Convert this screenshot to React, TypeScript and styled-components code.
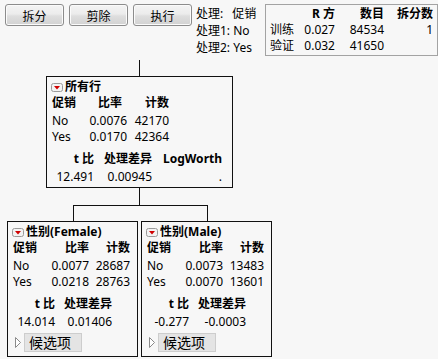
import React from 'react';
import styled, { createGlobalStyle, css } from 'styled-components';

const GlobalStyle = createGlobalStyle`
  body {
    margin: 0;
    background: #f7f7f7;
    font-family: "Noto Sans", "Noto Sans CJK SC", sans-serif;
    font-size: 12px;
    color: #000;
  }
`;

const Page = styled.div`
  padding: 4px 0 0 5px;
  width: 438px;
  height: 359px;
  box-sizing: border-box;
`;

const TopBar = styled.div`
  display: flex;
  align-items: flex-start;
  gap: 4px;
  height: 51px;
`;

const ButtonGroup = styled.div`
  display: flex;
  gap: 5px;
`;

const ToolButton = styled.button`
  width: 59px;
  height: 22px;
  padding: 0;
  border: 1px solid #8c8c8c;
  border-radius: 3px;
  background: linear-gradient(#f4f4f4, #ececec 45%, #dedede 55%, #d2d2d2);
  box-shadow: inset 0 0 0 1px #fbfbfb;
  font-family: "Noto Sans CJK SC", sans-serif;
  font-size: 12px;
  color: #000;
`;

const Labels = styled.div`
  width: 66px;
  padding-top: 1px;
  line-height: 17px;
  white-space: nowrap;
  overflow: hidden;
`;

const Gap = styled.span`
  margin-left: 9px;
`;

const SummaryTable = styled.div`
  display: grid;
  grid-template-columns: 25px 40px 49px 49px;
  grid-auto-rows: 16px;
  align-items: center;
  padding: 1px 4px 1px 4px;
  border: 1px solid #a3a3a3;
  line-height: 16px;
`;

const Cell = styled.div<{ $head?: boolean; $left?: boolean }>`
  text-align: ${p => (p.$left ? 'left' : 'right')};
  white-space: nowrap;
  ${p => p.$head && css`font-weight: 700;`}
`;

const Tree = styled.div`
  margin: 5px 0 0 2px;
  width: 265px;
  display: flex;
  flex-direction: column;
  align-items: center;
`;

const Stem = styled.div<{ $h: number }>`
  width: 1px;
  height: ${p => p.$h}px;
  background: #111;
`;

const Children = styled.div`
  display: flex;
  gap: 3px;
`;

const Branch = styled.div<{ $side: 'left' | 'right' }>`
  position: relative;
  padding-top: 16px;

  &::before {
    content: '';
    position: absolute;
    top: 0;
    left: 50%;
    width: 1px;
    height: 16px;
    background: #111;
  }

  &::after {
    content: '';
    position: absolute;
    top: 0;
    height: 1px;
    background: #111;
    ${p => (p.$side === 'left' ? css`left: 50%; right: -2px;` : css`left: -2px; right: 50%;`)}
  }
`;

const NodeBox = styled.div<{ $w: number }>`
  width: ${p => p.$w}px;
  box-sizing: border-box;
  border: 1px solid #111;
  padding: 2px 4px 2px 5px;
  line-height: 16px;
`;

const Title = styled.div`
  display: flex;
  align-items: center;
  height: 16px;
  margin-left: -1px;
  font-weight: 700;
  white-space: nowrap;
`;

const StatGrid = styled.div<{ $cols: string; $top?: number }>`
  display: grid;
  grid-template-columns: ${p => p.$cols};
  margin-top: ${p => p.$top ?? 0}px;
`;

const GridCell = styled.div<{ $head?: boolean; $left?: boolean; $inset?: number }>`
  height: ${p => (p.$head ? 18 : 16)}px;
  text-align: ${p => (p.$left ? 'left' : 'right')};
  padding-right: ${p => p.$inset ?? 0}px;
  white-space: nowrap;
  ${p => p.$head && css`font-weight: 700;`}
`;

const CandidateRow = styled.div`
  display: flex;
  align-items: center;
  margin: 3px 0 2px 1px;
  gap: 2px;
`;

const CandidateButton = styled.div`
  width: 58px;
  height: 19px;
  box-sizing: border-box;
  border: 1px solid #cdcdcd;
  background: #e4e4e4;
  padding-left: 4px;
  font-family: "Noto Sans CJK SC", sans-serif;
  font-size: 14px;
  line-height: 17px;
`;

function MenuIcon() {
  return (
    <svg width="13" height="9" viewBox="0 0 13 9" style={{ marginRight: 1, flex: 'none' }}>
      <rect x="0.5" y="0.5" width="11" height="8" rx="2" fill="#f3f3f3" stroke="#9a9a9a" />
      <polygon points="3,3 9,3 6,6.5" fill="#d00000" />
    </svg>
  );
}

function Disclosure() {
  return (
    <svg width="8" height="13" viewBox="0 0 8 13">
      <polygon points="1.5,1.5 6.5,6.5 1.5,11.5" fill="#fff" stroke="#8a8a8a" />
    </svg>
  );
}

type Rate = { level: string; rate: string; count: string };

interface NodeProps {
  title: string;
  width: number;
  rates: Rate[];
  rateCols: string;
  rateInset?: number;
  diff: { t: string; diff: string; logworth?: string };
  diffCols: string;
  candidates?: boolean;
}

function TreeNode({ title, width, rates, rateCols, rateInset, diff, diffCols, candidates }: NodeProps) {
  return (
    <NodeBox $w={width}>
      <Title>
        <MenuIcon />
        {title}
      </Title>
      <StatGrid $cols={rateCols}>
        <GridCell $head $left>促销</GridCell>
        <GridCell $head $inset={rateInset}>比率</GridCell>
        <GridCell $head>计数</GridCell>
        {rates.map(r => (
          <React.Fragment key={r.level}>
            <GridCell $left>{r.level}</GridCell>
            <GridCell>{r.rate}</GridCell>
            <GridCell>{r.count}</GridCell>
          </React.Fragment>
        ))}
      </StatGrid>
      <StatGrid $cols={diffCols} $top={6}>
        <GridCell $head>t 比</GridCell>
        <GridCell $head>处理差异</GridCell>
        {diff.logworth !== undefined && <GridCell $head>LogWorth</GridCell>}
        <GridCell>{diff.t}</GridCell>
        <GridCell>{diff.diff}</GridCell>
        {diff.logworth !== undefined && <GridCell>{diff.logworth}</GridCell>}
      </StatGrid>
      {candidates && (
        <CandidateRow>
          <Disclosure />
          <CandidateButton>候选项</CandidateButton>
        </CandidateRow>
      )}
    </NodeBox>
  );
}

export default function App() {
  return (
    <>
      <GlobalStyle />
      <Page>
        <TopBar>
          <ButtonGroup>
            <ToolButton>拆分</ToolButton>
            <ToolButton>剪除</ToolButton>
            <ToolButton>执行</ToolButton>
          </ButtonGroup>
          <Labels>
            <div>处理:<Gap>促销</Gap></div>
            <div>处理1: No</div>
            <div>处理2: Yes</div>
          </Labels>
          <SummaryTable>
            <Cell $left />
            <Cell $head>R 方</Cell>
            <Cell $head>数目</Cell>
            <Cell $head>拆分数</Cell>
            <Cell $left>训练</Cell>
            <Cell>0.027</Cell>
            <Cell>84534</Cell>
            <Cell>1</Cell>
            <Cell $left>验证</Cell>
            <Cell>0.032</Cell>
            <Cell>41650</Cell>
            <Cell />
          </SummaryTable>
        </TopBar>
        <Tree>
          <Stem $h={16} />
          <TreeNode
            title="所有行"
            width={187}
            rateCols="37px 38px 42px"
            rateInset={5}
            rates={[
              { level: 'No', rate: '0.0076', count: '42170' },
              { level: 'Yes', rate: '0.0170', count: '42364' },
            ]}
            diffCols="42px 58px 70px"
            diff={{ t: '12.491', diff: '0.00945', logworth: '.' }}
          />
          <Stem $h={17} />
          <Children>
            <Branch $side="left">
              <TreeNode
                title="性别(Female)"
                width={131}
                rateCols="37px 39px 41px"
                rates={[
                  { level: 'No', rate: '0.0077', count: '28687' },
                  { level: 'Yes', rate: '0.0218', count: '28763' },
                ]}
                diffCols="42px 57px"
                diff={{ t: '14.014', diff: '0.01406' }}
                candidates
              />
            </Branch>
            <Branch $side="right">
              <TreeNode
                title="性别(Male)"
                width={131}
                rateCols="37px 39px 41px"
                rates={[
                  { level: 'No', rate: '0.0073', count: '13483' },
                  { level: 'Yes', rate: '0.0070', count: '13601' },
                ]}
                diffCols="42px 57px"
                diff={{ t: '-0.277', diff: '-0.0003' }}
                candidates
              />
            </Branch>
          </Children>
        </Tree>
      </Page>
    </>
  );
}
